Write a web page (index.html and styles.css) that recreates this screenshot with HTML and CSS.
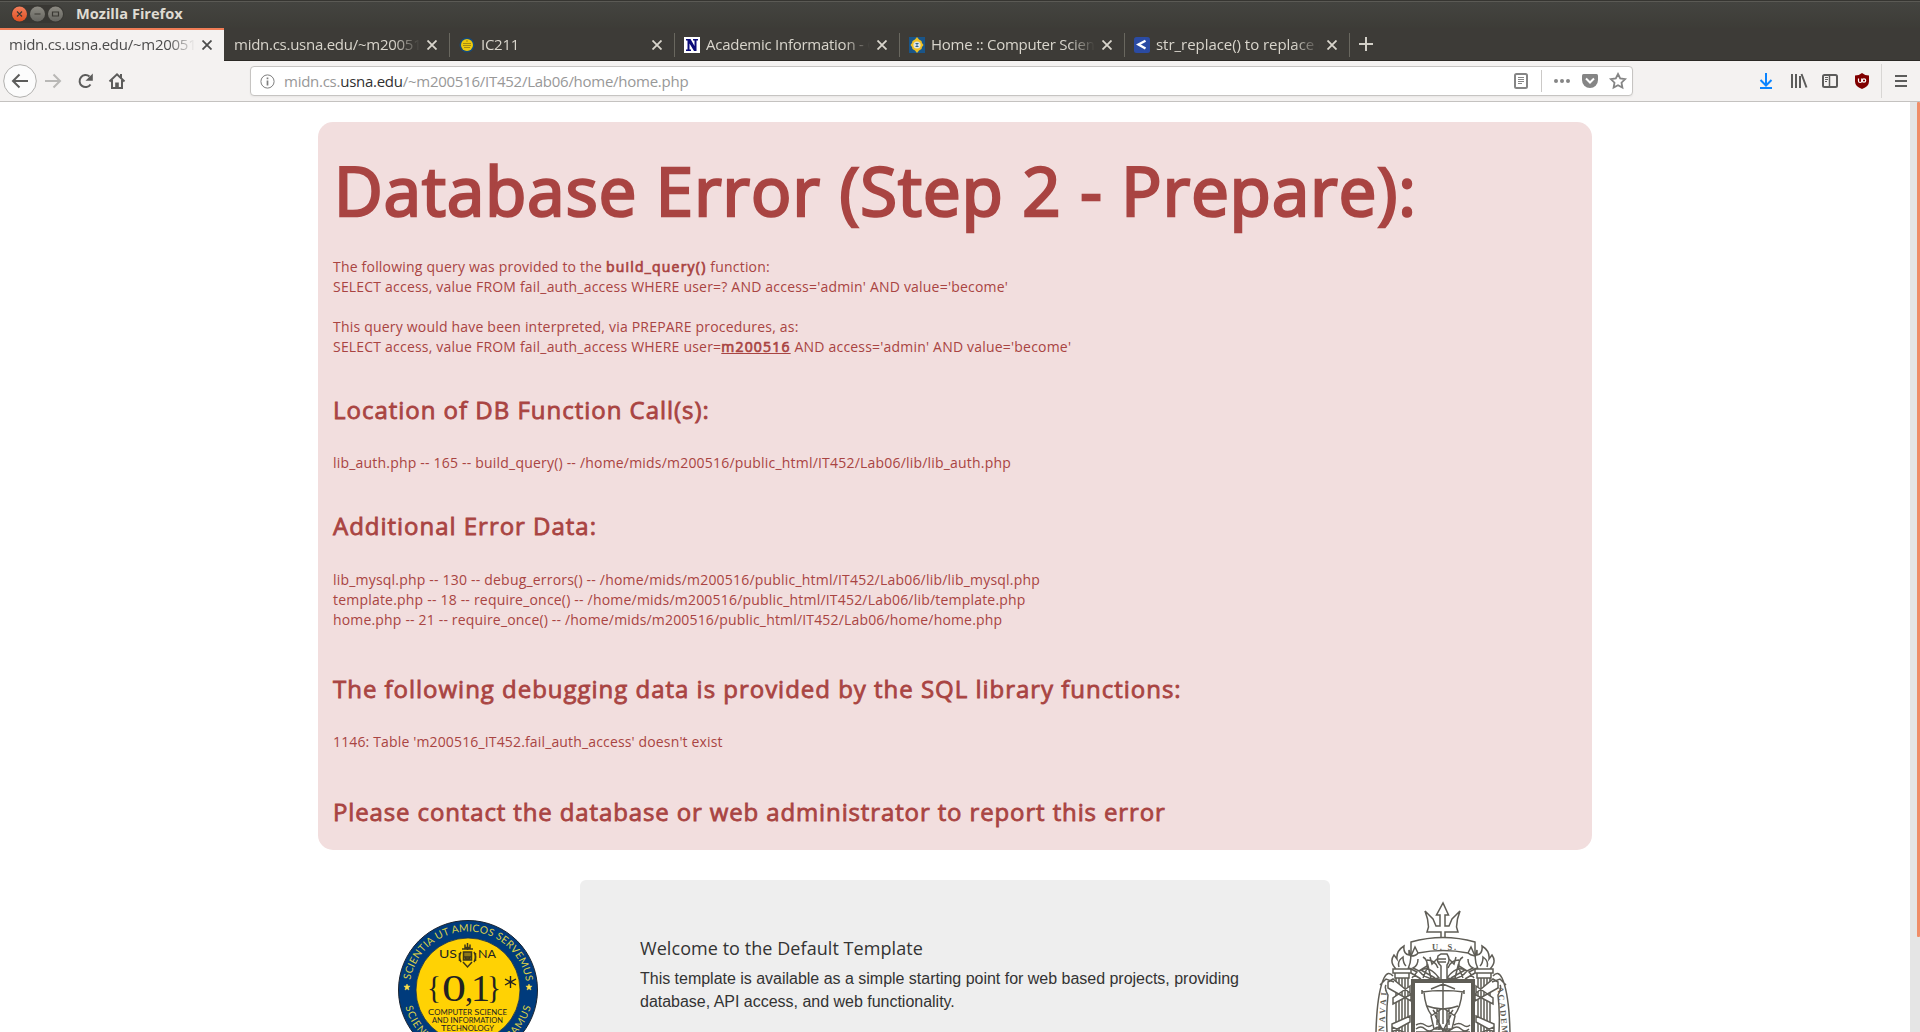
FILE: index.html
```html
<!DOCTYPE html>
<html lang="en">
<head>
<meta charset="utf-8">
<title>Mozilla Firefox</title>
<link rel="stylesheet" href="styles.css">
</head>
<body>
<header class="titlebar">
  <svg class="window-buttons" width="54" height="20" viewBox="0 0 54 20">
    <defs>
      <linearGradient id="closeFill" x1="0" y1="0" x2="0" y2="1"><stop offset="0" stop-color="#f37e5b"/><stop offset="1" stop-color="#e05022"/></linearGradient>
      <linearGradient id="grayFill" x1="0" y1="0" x2="0" y2="1"><stop offset="0" stop-color="#8c8a82"/><stop offset="1" stop-color="#666560"/></linearGradient>
    </defs>
    <rect x="1" y="1" width="53" height="18" rx="9" fill="#383733"/>
    <circle cx="9.500" cy="10" r="7.500" fill="url(#closeFill)"/>
    <circle cx="27.500" cy="10" r="7.500" fill="url(#grayFill)"/>
    <circle cx="45.500" cy="10" r="7.500" fill="url(#grayFill)"/>
    <path d="M7 7.500l5 5m0-5l-5 5M24.500 10h6M42.500 8h6v4h-6z" fill="none" stroke="#3a3833" stroke-width="1.200"/>
  </svg>
  <span class="window-title">Mozilla Firefox</span>
</header>

<nav class="tabs">
  <div class="tab active"><span class="label">midn.cs.usna.edu/~m200516</span><svg class="close" viewBox="0 0 10 10"><path d="M.5.5l9 9m0-9l-9 9"/></svg></div>
  <div class="tab first"><span class="label">midn.cs.usna.edu/~m200516</span><svg class="close" viewBox="0 0 10 10"><path d="M.5.5l9 9m0-9l-9 9"/></svg></div>
  <div class="tab">
    <svg class="favicon" viewBox="0 0 16 16"><circle cx="8" cy="8" r="7.500" fill="#174a78"/><circle cx="8" cy="8" r="6" fill="#edc90d"/><path d="M4 6.500h8M4 8.500h8M5 10.500h6M7 4h2" stroke="#a28a16" fill="none"/></svg>
    <span class="label">IC211</span><svg class="close" viewBox="0 0 10 10"><path d="M.5.5l9 9m0-9l-9 9"/></svg></div>
  <div class="tab">
    <svg class="favicon" viewBox="0 0 16 16"><rect width="16" height="16" fill="#fff"/><path d="M2 2h4.500l4 7V3.500H9V2h5v1.500h-1.500V14H10L5.500 6.500v6H7V14H2v-1.500h1.500v-9H2z" fill="#0a0a78"/></svg>
    <span class="label">Academic Information - C</span><svg class="close" viewBox="0 0 10 10"><path d="M.5.5l9 9m0-9l-9 9"/></svg></div>
  <div class="tab">
    <svg class="favicon" viewBox="0 0 16 16"><rect width="16" height="16" fill="#1a5588"/><path d="M8 0l2 2.500 2.500 1.500.5 2 1.500 2-1.500 2-.5 2-2.500 1.500L8 16l-2-2.500L3.500 12 3 10 1.500 8 3 6l.5-2L6 2.500z" fill="#efc024"/><circle cx="8" cy="8" r="3.600" fill="#dce4e6"/><path d="M6.500 6.500h3M8 6.500v3M6.500 9.500h3" stroke="#30638c"/></svg>
    <span class="label">Home :: Computer Science</span><svg class="close" viewBox="0 0 10 10"><path d="M.5.5l9 9m0-9l-9 9"/></svg></div>
  <div class="tab">
    <svg class="favicon" viewBox="0 0 16 16"><rect width="16" height="16" rx="2.500" fill="#2b4ba3"/><path d="M11.500 3.800L4.500 7.500l7 4" fill="none" stroke="#fff" stroke-width="2.400"/></svg>
    <span class="label wide">str_replace() to replace c</span><svg class="close" viewBox="0 0 10 10"><path d="M.5.5l9 9m0-9l-9 9"/></svg></div>
  <div class="new-tab"><svg width="14" height="14" viewBox="0 0 14 14"><path d="M7 0v14M0 7h14" stroke="#d3d0c8" stroke-width="2"/></svg></div>
</nav>

<div class="toolbar">
  <svg class="nav-icons" width="140" height="38" viewBox="0 0 140 38" fill="none" stroke="#5c5c5b" stroke-width="2">
    <circle cx="20" cy="19" r="16.300" fill="#fcfcfc" stroke="#b1b0ae" stroke-width="1"/>
    <path d="M28 19H13m6.500-6.500L13 19l6.500 6.500"/>
    <path d="M45 19h15m-6.500-6.500L60 19l-6.500 6.500" stroke="#b9b8b6"/>
    <path d="M90.500 22.500A6 6 0 1 1 89.500 14.500"/><path d="M92.800 11.500v7.300h-7.300z" fill="#5c5c5b" stroke="none"/>
    <path d="M109.500 19.500L117 12.300l7.500 7.200M112 18v8h10v-8"/><path d="M115.200 26v-5.500h3.600V26z" fill="#5c5c5b" stroke="none"/><path d="M121 12v4"/>
  </svg>
  <div class="urlbar">
    <svg class="info" width="15" height="15" viewBox="0 0 15 15"><circle cx="7.500" cy="7.500" r="6.600" fill="none" stroke="#7e7e7e"/><path d="M7.500 6.500v5M7.500 3.500v1.800" stroke="#7e7e7e" stroke-width="1.700"/></svg>
    <span class="url">midn.cs.<b>usna.edu</b>/~m200516/IT452/Lab06/home/home.php</span>
    <svg class="page-actions" width="120" height="28" viewBox="0 0 120 28" fill="none" stroke="#858585">
      <rect x="3" y="7" width="12" height="14" rx="1.500" stroke-width="2"/><path d="M6 10.500h6M6 12.500h6M6 14.500h6M6 16.500h4"/>
      <path d="M29.500 3v22" stroke="#cbc9c7"/>
      <g fill="#858585" stroke="none"><circle cx="44" cy="14" r="2"/><circle cx="50" cy="14" r="2"/><circle cx="56" cy="14" r="2"/><path d="M71.500 7h13q1.500 0 1.500 1.500V13a8 8 0 0 1-16 0V8.500Q70 7 71.500 7z"/></g>
      <path d="M74 11.500l4 4 4-4" stroke="#fff" stroke-width="2"/>
      <path d="M106 7l2.200 4.500 4.900.7-3.600 3.500.9 4.900-4.400-2.300-4.400 2.300.9-4.900-3.600-3.500 4.900-.7z" stroke-width="1.800"/>
    </svg>
  </div>
  <svg class="tools" width="160" height="38" viewBox="0 0 160 38" fill="none" stroke="#5c5c5b" stroke-width="2">
    <path d="M16 11v12m-5.500-5l5.500 5.500 5.500-5.500M10 26h12" stroke="#0a84ff"/>
    <path d="M42 12v14M46 12v14M50 14v12M51.500 12l5 13.500"/>
    <rect x="73" y="13" width="14" height="12" rx="1.500"/><path d="M79.500 13v12" stroke-width="1.500"/><path d="M75 15.500h3M75 17.500h3M75 19.500h2" stroke-width="1"/>
    <path d="M112 11q3 2.500 7 2.500v6q0 5-7 7.500-7-2.500-7-7.500v-6q4 0 7-2.500z" fill="#800000" stroke="none"/><path d="M108.500 16.500v2.500q0 1.500 1.600 1.500t1.600-1.500v-2.500m0 4v-4" stroke="#fff" stroke-width="1.200"/><circle cx="114" cy="18.500" r="1.700" stroke="#fff" stroke-width="1.200"/>
    <path d="M131.500 2v34" stroke="#d8d6d4" stroke-width="1"/>
    <path d="M145 14h12M145 19h12M145 24h12"/>
  </svg>
</div>

<main class="viewport">
  <div class="page">
    <section class="error">
      <h1>Database Error (Step 2 - Prepare):</h1>
      <p class="query">The following query was provided to the <b>build_query()</b> function:<br>SELECT access, value FROM fail_auth_access WHERE user=? AND access='admin' AND value='become'<br><br>This query would have been interpreted, via PREPARE procedures, as:<br>SELECT access, value FROM fail_auth_access WHERE user=<b><u>m200516</u></b> AND access='admin' AND value='become'</p>
      <h3 class="h-location">Location of DB Function Call(s):</h3>
      <p>lib_auth.php -- 165 -- build_query() -- /home/mids/m200516/public_html/IT452/Lab06/lib/lib_auth.php</p>
      <h3 class="h-additional">Additional Error Data:</h3>
      <p>lib_mysql.php -- 130 -- debug_errors() -- /home/mids/m200516/public_html/IT452/Lab06/lib/lib_mysql.php<br>template.php -- 18 -- require_once() -- /home/mids/m200516/public_html/IT452/Lab06/lib/template.php<br><span class="tight">home.php -- 21 -- require_once() -- /home/mids/m200516/public_html/IT452/Lab06/home/home.php</span></p>
      <h3 class="h-debug">The following debugging data is provided by the SQL library functions:</h3>
      <p class="mysql">1146: Table 'm200516_IT452.fail_auth_access' doesn't exist</p>
      <h3 class="h-contact">Please contact the database or web administrator to report this error</h3>
    </section>

    <div class="template">
      <svg class="seal" width="140" height="112" viewBox="0 0 140 112">
        <defs><path id="arcTop" d="M11.500 70a58.500 58.500 0 0 1 117 0"/><path id="arcBottom" d="M5 70a65 65 0 0 0 130 0"/></defs>
        <circle cx="70" cy="70" r="69.500" fill="#003b7c" stroke="#1b2430"/>
        <circle cx="70" cy="70" r="52" fill="#ffd204" stroke="#16304f" stroke-width=".8"/>
        <g font-family="Lato, sans-serif" fill="#d9cf4a" font-size="10.300">
          <text><textPath href="#arcTop" startOffset="10" textLength="165" lengthAdjust="spacing">SCIENTIA UT AMICOS SERVEMUS</textPath></text>
          <text><textPath href="#arcBottom" startOffset="17" textLength="170" lengthAdjust="spacing">SCIENTES UT PROFICISCAMUS</textPath></text>
        </g>
        <path d="M9 64l.9 2 2.200.2-1.700 1.500.6 2.300-2-1.200-2 1.200.6-2.300-1.700-1.500 2.200-.2zM131 64l.9 2 2.200.2-1.700 1.500.6 2.300-2-1.200-2 1.200.6-2.300-1.700-1.500 2.200-.2z" fill="#ffe14a" stroke="#ffe14a" stroke-width=".5"/>
        <g fill="#222">
          <text x="41" y="37.500" font-family="Lato, sans-serif" font-size="11" textLength="18" lengthAdjust="spacingAndGlyphs">US</text>
          <text x="80" y="37.500" font-family="Lato, sans-serif" font-size="11" textLength="18" lengthAdjust="spacingAndGlyphs">NA</text>
          <g font-family="Liberation Serif, serif">
            <text x="29" y="79" font-size="32" textLength="14" lengthAdjust="spacingAndGlyphs">{</text>
            <text x="44" y="81" font-size="38" textLength="24" lengthAdjust="spacingAndGlyphs">0</text>
            <text x="67" y="81" font-size="32">,</text>
            <text x="73" y="81" font-size="38" textLength="19" lengthAdjust="spacingAndGlyphs">1</text>
            <text x="89" y="79" font-size="32" textLength="14" lengthAdjust="spacingAndGlyphs">}</text>
          </g>
        </g>
        <path d="M112.500 56v12M107 59l11 6M107 65l11-6" stroke="#222" stroke-width="1.400"/>
        <g fill="none" stroke="#3e3719" stroke-width="1.500"><path d="M69.500 23v7M67 24.500v3h5v-3M64 29h11M63 32q-3 5 0 10M76 32q3 5 0 10M65 42l4.500 5 4.500-5"/><rect x="65.500" y="32" width="8" height="8" fill="#8e7918"/><path d="M67 37h5l-1 2h-3zM61.500 33v8M77.500 33v8"/></g>
        <g fill="#222" text-anchor="middle" font-family="Lato, sans-serif" font-size="6.600">
          <text x="69.500" y="94.500" textLength="79" lengthAdjust="spacingAndGlyphs"><tspan font-size="8">C</tspan>OMPUTER <tspan font-size="8">S</tspan>CIENCE</text>
          <text x="69.500" y="103" textLength="71" lengthAdjust="spacingAndGlyphs">AND <tspan font-size="8">I</tspan>NFORMATION</text>
          <text x="69.500" y="111" textLength="53" lengthAdjust="spacingAndGlyphs"><tspan font-size="8">T</tspan>ECHNOLOGY</text>
        </g>
      </svg>
      <article class="welcome">
        <h4>Welcome to the Default Template</h4>
        <p>This template is available as a simple starting point for web based projects, providing<br>database, API access, and web functionality.</p>
      </article>
      <svg class="crest" width="140" height="132" viewBox="0 0 140 132" fill="none" stroke="#5f5d56" stroke-width="1.500">
        <path d="M68 41V32H54l1.500-5-1-8-2.500-8 8 8 3 7h4V15h-3.500L70 3l5.500 12H72v11h4l3-7 8-8-2.500 8-1 8 1.500 5H72v9"/>
        <path d="M38 42q32-9 64 0v14q-5-1-7-3-25-5-50 0-2 3-7 3z" fill="#fff"/>
        <path d="M38 56l4-9 3 6M102 56l-4-9-3 6"/>
        <text x="59" y="50" fill="#5f5d56" stroke="none" font-family="Liberation Serif, serif" font-weight="bold" font-size="8.500" textLength="24">U. S.</text>
        <path d="M50 57q5 3 4 9l-8 5-6-3q5-2 5-9M90 57q-5 3-4 9l8 5 6-3q-5-2-5-9M54 60q8 0 11 8M86 60q-8 0-11 8M46 71q10-7 20 7-12 3-20-7zM94 71q-10-7-20 7 12 3 20-7zM50 78l5-12 3 12M90 78l-5-12-3 12M38 73l10 6M102 73l-10 6M57 57l2 7 5-5M83 57l-2 7-5-5M48 70l14 8M92 70l-14 8M36 68l8 4-5 6M104 68l-8 4 5 6"/>
        <path d="M68 80V66q-5-4-3-10l3-2h6q4 6 0 11v15M65 59h8M65 62h8" fill="#fff"/>
        <path d="M23 69q-7-7-2-14l3 4q-1-8 7-13-1 8 5 9v-5q4 8-1 19zM26 67q-2-6 4-10 0 6 3 9M20 69h18v4H20zM22 73h14v5H22zM23 78v54M26 78v54M29 78v54M32 78v54M35 78v54"/>
        <path d="M117 69q7-7 2-14l-3 4q1-8-7-13 1 8-5 9v-5q-4 8 1 19zM114 67q2-6-4-10 0 6-3 9M120 69h-18v4h18zM118 73h-14v5h14zM117 78v54M114 78v54M111 78v54M108 78v54M105 78v54"/>
        <path d="M15 82l5-3 18 15v7L15 88zM37 86l-17 12v6l17-9zM19 127l16 7M37 122l-18 10v-8l18-8zM125 82l-5-3-18 15v7l23-13zM103 86l17 12v6l-17-9zM121 127l-16 7M103 122l18 10v-8l-18-8z" fill="#fff"/>
        <path d="M20 76q-5-6-9 2Q4 93 3 132M13 85q-2 3 2 10-2 18-1 37M7 85l6-6 8 3M120 76q5-6 9 2 7 15 8 54M127 85q2 3-2 10 2 18 1 37M133 85l-6-6-8 3"/>
        <g fill="#5f5d56" stroke="none" font-family="Liberation Serif, serif" font-weight="bold" font-size="8.500"><text transform="translate(11 132) rotate(-86)" textLength="42">NAVAL</text><text transform="translate(124.500 87) rotate(84)" textLength="55">ACADEMY</text></g>
        <path d="M40 132V81h60v51" fill="#fff" stroke-width="4"/>
        <path d="M49 92q21-3 42 0M49 90v4M91 90v4M58 89l12-5 12 5M51 92q1 15 8 24M89 92q-1 15-8 24M54 106q16 6 31 0M70 82v42M58 116l12-8 12 8-3 13H61zM60 110l3 4M80 110l-3 4M62 115l8 16 8-16M66 110v20M74 110v20M64 109v16M76 109v16M43 129q5-4 9 0t9 0 9 0 9 0 9 0 8 0M43 125q5-3 9 0t7 0M81 125q5-3 9 0t7 0M43 132h54"/>
      </svg>
    </div>
  </div>
  <div class="scrollbar"><div class="thumb"></div></div>
</main>
</body>
</html>
```
FILE: styles.css
```css
* { box-sizing: border-box; }
body {
  margin: 0;
  width: 1920px;
  height: 1032px;
  overflow: hidden;
  display: flex;
  flex-direction: column;
  background: #fff;
  font-family: "Open Sans", sans-serif;
}
svg { display: block; flex: none; }

.titlebar {
  height: 28px;
  flex: none;
  display: flex;
  align-items: center;
  padding-left: 10px;
  background: linear-gradient(#363531 0 1px, #5b5a55 1px 2px, #444440 2px, #3d3c37);
}
.window-title {
  margin: -2px 0 0 12px;
  color: #dfdbd2;
  font-size: 14.6px;
  font-weight: 700;
}

.tabs {
  height: 33px;
  flex: none;
  display: flex;
  background: #3d3b37;
  border-bottom: 1px solid #2b2925;
}
.tab {
  width: 225px;
  display: flex;
  align-items: center;
  padding: 1px 13px 0 9px;
  color: #d9d5cc;
  background: linear-gradient(#69675f, #69675f) right 5px / 1px 24px no-repeat;
}
.tab.active {
  width: 224px;
  height: 33px;
  background: #f4f2f1;
  border-top: 2px solid #f07d56;
  padding: 0 12px 1px 9px;
  color: #4c4c4c;
}
.tab.first { width: 226px; padding-left: 10px; }
.favicon { width: 16px; height: 16px; margin-right: 6px; }
.label {
  flex: 1;
  overflow: hidden;
  white-space: nowrap;
  margin-top: -2px;
  font-size: 15px;
  letter-spacing: -.26px;
  -webkit-mask-image: linear-gradient(to right, #000 calc(100% - 26px), transparent);
  mask-image: linear-gradient(to right, #000 calc(100% - 26px), transparent);
}
.label.wide { letter-spacing: -.04px; }
.close { width: 10px; height: 10px; margin-left: 7px; fill: none; stroke: currentColor; stroke-width: 1.8; }
.new-tab { padding: 9px 0 0 9px; }

.toolbar {
  height: 41px;
  flex: none;
  display: flex;
  align-items: center;
  background: #f4f2f1;
  border-bottom: 1px solid #c4c2c0;
}
.urlbar {
  width: 1383px;
  height: 30px;
  margin-left: 110px;
  display: flex;
  align-items: center;
  padding-left: 9px;
  background: #fff;
  border: 1px solid #c6c4c2;
  border-radius: 4px;
  box-shadow: 0 1px 2px #0000000d;
}
.url { flex: 1; margin-left: 9px; font-size: 15px; letter-spacing: -.26px; color: #989898; }
.url b { font-weight: 400; color: #303030; }
.tools { margin-left: 117px; }

.viewport { flex: 1; min-height: 0; display: flex; }
.page { flex: 1; overflow: hidden; padding: 20px 318px 0; }
.scrollbar { width: 10px; background: #e5e5e5; padding-left: 7px; }
.thumb { height: 835px; background: #f08d68; border-radius: 1px; }

.error {
  height: 728px;
  padding: 31px 15px 0;
  display: flex;
  flex-direction: column;
  border-radius: 15px;
  background: #f2dede;
  color: #a94442;
  font-size: 14px;
  line-height: 20px;
  letter-spacing: .2px;
}
.error h1, .error h3, .error p { margin: 0; white-space: nowrap; }
.error h1 { padding-left: 1px; font-size: 67px; line-height: 74px; font-weight: 400; -webkit-text-stroke: 2.6px; letter-spacing: 1.08px; }
.error h3 { font-size: 24px; line-height: 26px; font-weight: 400; -webkit-text-stroke: .8px; letter-spacing: .98px; }
.error b { font-weight: 400; -webkit-text-stroke: .7px; letter-spacing: 1.2px; }
.error .mysql { letter-spacing: .15px; }
.error .tight { letter-spacing: .17px; }
.error .query { margin-top: 30px; }
.error .h-location { margin: 40px 0 30px; }
.error .h-additional { margin: 40px 0 31px; }
.error .h-debug { margin: 46px 0 30px; }
.error .h-contact { margin-top: 47px; letter-spacing: .87px; }

.template { display: flex; margin-top: 30px; }
.seal { margin: 40px 42px 0 80px; }
.welcome {
  width: 750px;
  height: 200px;
  padding: 56px 60px 0;
  border-radius: 6px;
  background: #eee;
  color: #333;
}
.welcome h4 { margin: 0; font-size: 18px; line-height: 24px; font-weight: 400; letter-spacing: .06px; }
.welcome p { margin: 7px 0 0; font: 16px/23px "Liberation Sans", sans-serif; letter-spacing: -.015px; white-space: nowrap; }
.crest { margin: 20px 0 0 43px; }
```
